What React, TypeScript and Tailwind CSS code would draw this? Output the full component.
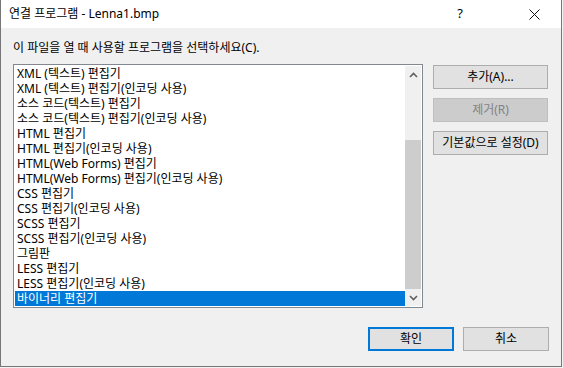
import React from "react";

const items = [
  "XML (텍스트) 편집기",
  "XML (텍스트) 편집기(인코딩 사용)",
  "소스 코드(텍스트) 편집기",
  "소스 코드(텍스트) 편집기(인코딩 사용)",
  "HTML 편집기",
  "HTML 편집기(인코딩 사용)",
  "HTML(Web Forms) 편집기",
  "HTML(Web Forms) 편집기(인코딩 사용)",
  "CSS 편집기",
  "CSS 편집기(인코딩 사용)",
  "SCSS 편집기",
  "SCSS 편집기(인코딩 사용)",
  "그림판",
  "LESS 편집기",
  "LESS 편집기(인코딩 사용)",
  "바이너리 편집기",
];

const font = { fontFamily: '"Noto Sans", "Noto Sans CJK KR", sans-serif' };

function Chevron({ up }: { up?: boolean }) {
  return (
    <svg width="9" height="6" viewBox="0 0 9 6">
      <path
        d={up ? "M1 5 L4.5 1.5 L8 5" : "M1 1 L4.5 4.5 L8 1"}
        fill="none"
        stroke="#606060"
        strokeWidth="1.6"
      />
    </svg>
  );
}

function Button({ label, disabled, primary }: { label: string; disabled?: boolean; primary?: boolean }) {
  return (
    <div
      className={`h-[24px] flex items-center justify-center text-[12px] ${
        disabled
          ? "bg-[#cccccc] border border-[#bfbfbf] text-[#838383]"
          : primary
          ? "bg-[#e1e1e1] border-2 border-[#0078d7] text-black"
          : "bg-[#e1e1e1] border border-[#adadad] text-black"
      }`}
    >
      {label}
    </div>
  );
}

export default function App() {
  return (
    <div className="w-[563px] h-[368px] bg-[#f3f3f3] overflow-hidden" style={font}>
      <div className="w-[562px] h-[367px] flex flex-col bg-[#f0f0f0] border-x border-b border-[#767676]">
        {/* Title bar */}
        <div className="h-[28px] bg-white flex items-center shrink-0">
          <span className="ml-[8px] text-[12px] text-black">연결 프로그램 - Lenna1.bmp</span>
          <span className="ml-auto mr-[66px] text-[13px] text-black">?</span>
          <svg width="11" height="11" viewBox="0 0 11 11" className="mr-[21px]">
            <path d="M0.5 0.5 L10.5 10.5 M10.5 0.5 L0.5 10.5" stroke="#111" strokeWidth="1" />
          </svg>
        </div>

        {/* Body */}
        <div className="flex flex-col flex-1 pl-[12px] pr-[12px]">
          <div className="mt-[12px] h-[16px] text-[12px] leading-[16px] text-black">
            이 파일을 열 때 사용할 프로그램을 선택하세요(C).
          </div>

          <div className="flex mt-[8px] gap-[10px]">
            {/* List box */}
            <div className="w-[410px] h-[244px] border border-[#828790] bg-white p-[1px] flex">
              <div className="flex-1 flex flex-col">
                {items.map((t, i) => (
                  <div
                    key={t}
                    className={`h-[15px] leading-[15px] text-[12px] pl-[2px] whitespace-nowrap ${
                      i === items.length - 1 ? "bg-[#0078d7] text-white" : "text-black"
                    }`}
                  >
                    {t}
                  </div>
                ))}
              </div>
              <div className="w-[16px] bg-[#f0f0f0] flex flex-col">
                <div className="h-[17px] flex items-center justify-center">
                  <Chevron up />
                </div>
                <div className="h-[57px]" />
                <div className="h-[149px] bg-[#cdcdcd]" />
                <div className="flex-1 flex items-center justify-center">
                  <Chevron />
                </div>
              </div>
            </div>

            {/* Side buttons */}
            <div className="w-[115px] flex flex-col gap-[9px] mt-[1px]">
              <Button label="추가(A)..." />
              <Button label="제거(R)" disabled />
              <Button label="기본값으로 설정(D)" />
            </div>
          </div>

          <div className="flex justify-end gap-[9px] mt-[19px]">
            <div className="w-[86px]">
              <Button label="확인" primary />
            </div>
            <div className="w-[86px]">
              <Button label="취소" />
            </div>
          </div>
        </div>
      </div>
    </div>
  );
}
